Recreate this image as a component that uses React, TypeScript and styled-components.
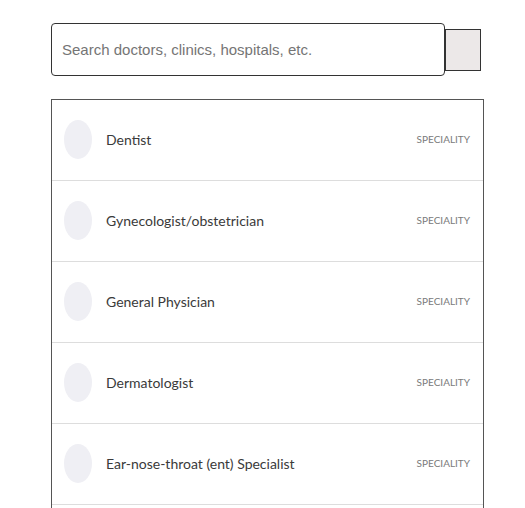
import React from 'react';
import styled, { createGlobalStyle } from 'styled-components';

const GlobalStyle = createGlobalStyle`
  body {
    margin: 0;
    background: #fff;
    font-family: Lato, "Liberation Sans", sans-serif;
  }
`;

const Page = styled.div`
  padding: 23px 0 0 51px;
  width: 432px;
`;

const SearchBar = styled.div`
  display: flex;
  align-items: center;
`;

const SearchInput = styled.input`
  box-sizing: border-box;
  width: 394px;
  height: 53px;
  padding: 0 10px;
  border: 1px solid #333;
  border-radius: 4px;
  font-family: "Liberation Sans", Arial, sans-serif;
  font-size: 15px;
  color: #333;
  outline: none;

  &::placeholder {
    color: #757575;
  }
`;

const SearchButton = styled.button`
  box-sizing: border-box;
  width: 36px;
  height: 42px;
  background: #ece8e8;
  border: 1px solid #333;
  border-radius: 0;
  padding: 0;
`;

const List = styled.ul`
  list-style: none;
  margin: 23px 0 0;
  padding: 0;
  box-sizing: border-box;
  width: 433px;
  min-height: 420px;
  border: 1px solid #555;
  border-bottom: none;
`;

const Row = styled.li`
  display: flex;
  align-items: center;
  height: 80px;
  padding: 0 13px 2px 12px;
  box-sizing: content-box;
  height: 78px;
  border-bottom: 1px solid #ddd;
`;

const Avatar = styled.div`
  width: 28px;
  height: 39px;
  border-radius: 50%;
  background: #efeff4;
  flex-shrink: 0;
`;

const Name = styled.span`
  flex: 1;
  margin-left: 14px;
  font-size: 14px;
  color: #3a3a3a;
`;

const Tag = styled.span`
  font-size: 10px;
  color: #7a7a7a;
  text-transform: uppercase;
`;

const items = [
  'Dentist',
  'Gynecologist/obstetrician',
  'General Physician',
  'Dermatologist',
  'Ear-nose-throat (ent) Specialist',
];

export default function App() {
  return (
    <Page>
      <GlobalStyle />
      <SearchBar>
        <SearchInput placeholder="Search doctors, clinics, hospitals, etc." autoFocus />
        <SearchButton aria-label="search" />
      </SearchBar>
      <List>
        {items.map((name) => (
          <Row key={name}>
            <Avatar />
            <Name>{name}</Name>
            <Tag>Speciality</Tag>
          </Row>
        ))}
      </List>
    </Page>
  );
}
